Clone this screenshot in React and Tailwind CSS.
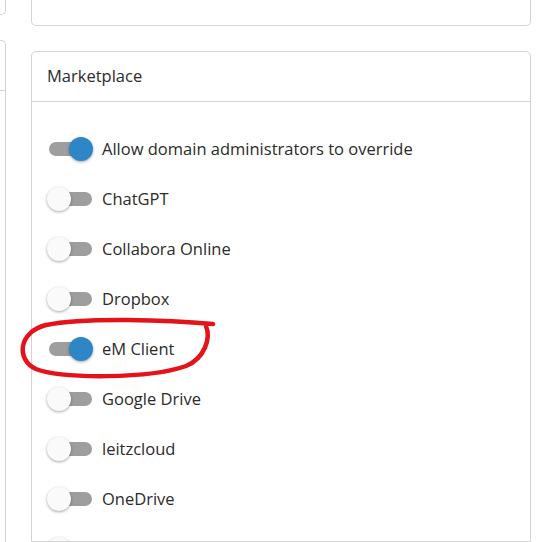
const APPS = [
  { label: 'Allow domain administrators to override', on: true },
  { label: 'ChatGPT', on: false },
  { label: 'Collabora Online', on: false },
  { label: 'Dropbox', on: false },
  { label: 'eM Client', on: true },
  { label: 'Google Drive', on: false },
  { label: 'leitzcloud', on: false },
  { label: 'OneDrive', on: false },
  { label: 'OnlyOffice', on: false },
]

function Toggle({ on }) {
  return (
    <div className="relative w-[46px] h-[24px] shrink-0">
      <div className="absolute left-[2px] right-[1px] top-[5px] h-[14px] rounded-full bg-[#9e9e9e]" />
      <div
        className={`absolute top-0 w-[24px] h-[24px] rounded-full shadow-[0_1px_3px_rgba(0,0,0,0.35)] ${on ? 'right-0 bg-[#2e86c6]' : 'left-0 bg-[#fafafa]'}`}
      />
    </div>
  )
}

export default function App() {
  return (
    <div className="relative w-[543px] h-[542px] overflow-hidden bg-white text-[#2b2b2b] font-['Open_Sans',sans-serif]">
      <div className="flex h-full">
        {/* left column, cut off */}
        <div className="w-[6px] shrink-0 flex flex-col">
          <div className="h-[15px] shrink-0 border-r border-b border-[#d4d4d4] rounded-br-[5px]" />
          <div className="mt-[25px] flex-1 border-r border-t border-[#d4d4d4] rounded-tr-[5px]">
            <div className="h-[50px] border-b border-[#d4d4d4]" />
          </div>
        </div>

        {/* main column */}
        <div className="ml-[25px] w-[500px] shrink-0 flex flex-col">
          <div className="h-[26px] shrink-0 border-x border-b border-[#d4d4d4] rounded-b-[5px]" />
          <div className="mt-[25px] flex-1 min-h-0 overflow-hidden border border-[#d4d4d4] rounded-t-[5px]">
            <div className="h-[50px] border-b border-[#d4d4d4] px-[15px] flex items-center text-[16.5px]">
              Marketplace
            </div>
            <div className="pt-[22px] px-[15px]">
              {APPS.map(a => (
                <div key={a.label} className="h-[50px] flex items-center">
                  <Toggle on={a.on} />
                  <span className="ml-[9px] text-[16.5px]">{a.label}</span>
                </div>
              ))}
            </div>
          </div>
        </div>
      </div>

      {/* red marker annotation */}
      <svg className="absolute inset-0 pointer-events-none" width="543" height="542" viewBox="0 0 543 542">
        <path
          d="M213 324 C170 320, 85 317, 46 325 C18 332, 16 360, 36 369 C62 379, 150 379, 186 366 C205 358, 211 338, 206 326"
          fill="none"
          stroke="#e3121b"
          strokeWidth="4.5"
          strokeLinecap="round"
        />
      </svg>
    </div>
  )
}
